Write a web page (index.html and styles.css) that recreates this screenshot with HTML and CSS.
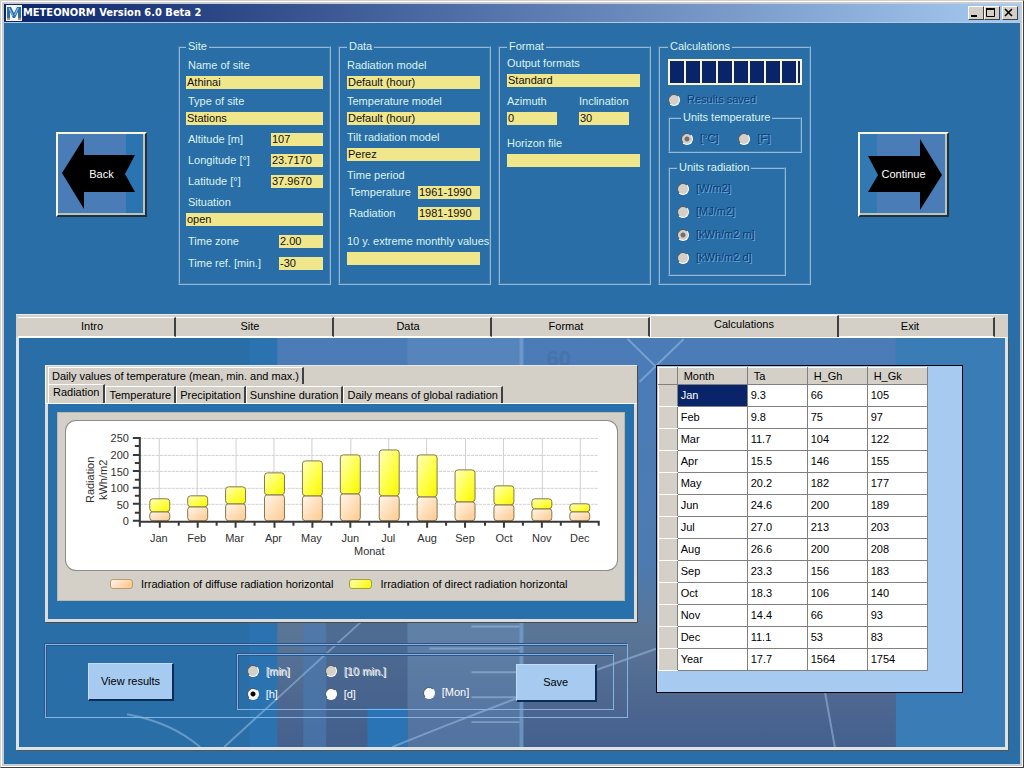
FILE: index.html
```html
<!DOCTYPE html>
<html lang="en">
<head>
<meta charset="utf-8">
<title>METEONORM Version 6.0 Beta 2</title>
<link rel="stylesheet" href="styles.css">
</head>
<body>
<div class="window">
  <header class="titlebar">
    <svg class="app-icon" viewBox="0 0 16 16" aria-hidden="true">
      <rect width="16" height="16" fill="#f4f8fc"/>
      <path d="M1 14V2h4l3 6 3-6h4v12h-3V7l-3 6H7L4 7v7z" fill="#2d6ca8"/>
      <path d="M3 3l4 8M9 10l3-7" stroke="#79b4dc" stroke-width="1.5" fill="none"/>
      <path d="M1 14h3M12 14h3" stroke="#c58a62" stroke-width="2"/>
    </svg>
    <h1 class="title">METEONORM Version 6.0 Beta 2</h1>
    <div class="window-buttons">
      <button class="winbtn" aria-label="Minimize"><svg viewBox="0 0 12 10"><path d="M2 8h6" stroke="#000" stroke-width="2"/></svg></button>
      <button class="winbtn" aria-label="Maximize"><svg viewBox="0 0 12 10"><path d="M1.500 1.500v7h8v-7M1 1h9" stroke="#000" fill="none"/><path d="M1 1h9" stroke="#000" stroke-width="2"/></svg></button>
      <button class="winbtn winbtn-close" aria-label="Close"><svg viewBox="0 0 12 10"><path d="M2 1l7 7M9 1l-7 7" stroke="#000" stroke-width="1.600"/></svg></button>
    </div>
  </header>

  <section class="overview">
    <button class="nav-btn nav-back">
      <svg viewBox="0 0 87 81" preserveAspectRatio="none" aria-hidden="true"><path d="M4 39L26 4v17h51l-10 19 10 18H26v17z"/></svg>
      <span>Back</span>
    </button>

    <div class="groups">
      <fieldset class="group">
        <legend>Site</legend>
        <div class="pair sp6"><label for="name">Name of site</label><input id="name" readonly value="Athinai"></div>
        <div class="pair sp6"><label for="type">Type of site</label><input id="type" readonly value="Stations"></div>
        <div class="line sp8"><label for="alt">Altitude [m]</label><input id="alt" class="w52" readonly value="107"></div>
        <div class="line sp8"><label for="lon">Longitude [°]</label><input id="lon" class="w52" readonly value="23.7170"></div>
        <div class="line sp8"><label for="lat">Latitude [°]</label><input id="lat" class="w52" readonly value="37.9670"></div>
        <div class="pair sp8"><label for="sit">Situation</label><input id="sit" readonly value="open"></div>
        <div class="line sp9"><label for="tz">Time zone</label><input id="tz" class="w44" readonly value="2.00"></div>
        <div class="line sp9"><label for="tr">Time ref. [min.]</label><input id="tr" class="w44" readonly value="-30"></div>
      </fieldset>

      <fieldset class="group group-data">
        <legend>Data</legend>
        <div class="pair sp6"><label for="rad">Radiation model</label><input id="rad" readonly value="Default (hour)"></div>
        <div class="pair sp6"><label for="tmp">Temperature model</label><input id="tmp" readonly value="Default (hour)"></div>
        <div class="pair sp6"><label for="tilt">Tilt radiation model</label><input id="tilt" readonly value="Perez"></div>
        <p class="caption sp8">Time period</p>
        <div class="line sp4"><label for="pt">Temperature</label><input id="pt" class="w62" readonly value="1961-1990"></div>
        <div class="line sp8"><label for="pr">Radiation</label><input id="pr" class="w62" readonly value="1981-1990"></div>
        <div class="pair sp15"><label class="wide" for="ext">10 y. extreme monthly values</label><input id="ext" readonly value=""></div>
      </fieldset>

      <fieldset class="group group-format">
        <legend>Format</legend>
        <div class="pair sp4"><label for="out">Output formats</label><input id="out" readonly value="Standard"></div>
        <div class="twin sp8">
          <div class="pair"><label for="azi">Azimuth</label><input id="azi" readonly value="0"></div>
          <div class="pair"><label for="inc">Inclination</label><input id="inc" readonly value="30"></div>
        </div>
        <div class="pair sp12"><label for="hor">Horizon file</label><input id="hor" readonly value=""></div>
      </fieldset>

      <fieldset class="group group-calc">
        <legend>Calculations</legend>
        <progress class="progress" max="100" value="100" aria-label="Calculation progress"></progress>
        <label class="radio sp8"><input type="radio" name="saved" disabled><span>Results saved</span></label>
        <fieldset class="subgroup temp">
          <legend>Units temperature</legend>
          <label class="radio"><input type="radio" name="ut" disabled checked><span>[°C]</span></label>
          <label class="radio"><input type="radio" name="ut" disabled><span>[F]</span></label>
        </fieldset>
        <fieldset class="subgroup radn">
          <legend>Units radiation</legend>
          <label class="radio"><input type="radio" name="ur" disabled><span>[W/m2]</span></label>
          <label class="radio"><input type="radio" name="ur" disabled><span>[MJ/m2]</span></label>
          <label class="radio"><input type="radio" name="ur" disabled checked><span>[kWh/m2 m]</span></label>
          <label class="radio"><input type="radio" name="ur" disabled><span>[kWh/m2 d]</span></label>
        </fieldset>
      </fieldset>
    </div>

    <button class="nav-btn nav-next">
      <svg viewBox="0 0 87 81" preserveAspectRatio="none" aria-hidden="true"><path d="M82 41L60 5v17H8l10 19L8 58h52v18z"/></svg>
      <span>Continue</span>
    </button>
  </section>

  <main class="wizard">
    <nav class="tabs">
      <button class="tab">Intro</button>
      <button class="tab">Site</button>
      <button class="tab">Data</button>
      <button class="tab">Format</button>
      <button class="tab tab-active">Calculations</button>
      <button class="tab">Exit</button>
    </nav>

    <div class="page">
      <svg class="backdrop" viewBox="0 0 985 411" preserveAspectRatio="none" aria-hidden="true">
        <defs>
          <linearGradient id="bg" x1="0" y1="0" x2="0" y2="1">
            <stop offset="0" stop-color="#4b7cb8"/><stop offset=".55" stop-color="#4d7ab0"/>
            <stop offset=".72" stop-color="#5a7696"/><stop offset=".9" stop-color="#4c6690"/><stop offset="1" stop-color="#44608e"/>
          </linearGradient>
        </defs>
        <rect width="985" height="411" fill="#2a6ea8"/>
        <rect x="230" width="28" height="411" fill="#2a73b0"/>
        <rect x="258" width="618" height="411" fill="url(#bg)"/>
        <rect x="388" width="115" height="411" fill="#6c94c4" opacity=".35"/>
        <rect x="284" y="280" width="23" height="131" fill="#4a7cb4" opacity=".6"/>
        <rect x="307" y="280" width="81" height="131" fill="#40608c" opacity=".45"/>
        <rect x="348" y="372" width="40" height="39" fill="#2a73b4"/>
        <rect x="500" width="4" height="411" fill="#7ba7d4" opacity=".6"/>
        <rect x="876" width="109" height="411" fill="#3a7db6"/>
        <text x="527" y="28" class="backdrop-text">60</text>
        <g fill="none" stroke="#a4c4e4" stroke-width="2" opacity=".5">
          <path d="M608 1L680 72M664 1L620 44M205 411L343 284M108 378Q152 386 181 411M373 411L425 390L500 361L640 311M805 355L815 411"/>
          <path d="M452 290h48M410 312h90M452 336h48M452 361h48M452 386h48"/>
        </g>
      </svg>

      <div class="left">
        <section class="results">
          <nav class="subtabs">
            <div class="subrow"><button class="subtab">Daily values of temperature (mean, min. and max.)</button></div>
            <div class="subrow">
              <button class="subtab subtab-active">Radiation</button>
              <button class="subtab">Temperature</button>
              <button class="subtab">Precipitation</button>
              <button class="subtab">Sunshine duration</button>
              <button class="subtab">Daily means of global radiation</button>
            </div>
          </nav>
          <div class="results-body">
            <figure class="chart">
              <svg class="plot" viewBox="0 0 552 149" role="img" aria-label="Monthly radiation in kWh/m2">
                <defs>
                  <linearGradient id="dif" x1="0" y1="0" x2="1" y2="1"><stop offset="0" stop-color="#fff6ec"/><stop offset="1" stop-color="#ffc98c"/></linearGradient>
                  <linearGradient id="dir" x1="0" y1="0" x2="1" y2="1"><stop offset="0" stop-color="#ffffc0"/><stop offset=".6" stop-color="#ffff3c"/><stop offset="1" stop-color="#f6f600"/></linearGradient>
                </defs>
                <path class="grid" d="M74 17.500H534M74 34.500H534M74 50.500H534M74 67.500H534M74 83.500H534"/>
                <path class="grid-v" d="M93.500 17V100M131.500 17V100M170.500 17V100M208.500 17V100M246.500 17V100M285.500 17V100M323.500 17V100M361.500 17V100M400.500 17V100M438.500 17V100M477.500 17V100M515.500 17V100"/>
                <g class="bar" fill="url(#dif)">
                  <rect x="84" y="91" width="20" height="9" rx="3"/><rect x="122" y="86" width="20" height="14" rx="3"/><rect x="160" y="83" width="20" height="17" rx="3"/><rect x="199" y="74" width="20" height="26" rx="3"/><rect x="237" y="75" width="20" height="25" rx="3"/><rect x="275" y="73" width="20" height="27" rx="3"/><rect x="314" y="75" width="20" height="25" rx="3"/><rect x="352" y="76" width="20" height="24" rx="3"/><rect x="390" y="81" width="20" height="19" rx="3"/><rect x="429" y="84" width="20" height="16" rx="3"/><rect x="467" y="88" width="20" height="12" rx="3"/><rect x="505" y="91" width="20" height="9" rx="3"/>
                </g>
                <g class="bar" fill="url(#dir)">
                  <rect x="84" y="78" width="20" height="13" rx="3"/><rect x="122" y="75" width="20" height="11" rx="3"/><rect x="160" y="66" width="20" height="17" rx="3"/><rect x="199" y="52" width="20" height="22" rx="3"/><rect x="237" y="40" width="20" height="35" rx="3"/><rect x="275" y="34" width="20" height="39" rx="3"/><rect x="314" y="29" width="20" height="46" rx="3"/><rect x="352" y="34" width="20" height="42" rx="3"/><rect x="390" y="49" width="20" height="32" rx="3"/><rect x="429" y="65" width="20" height="19" rx="3"/><rect x="467" y="78" width="20" height="10" rx="3"/><rect x="505" y="83" width="20" height="8" rx="3"/>
                </g>
                <path class="axis" d="M74 16V106M73 101H535M67 17h7M67 34h7M67 50h7M67 67h7M67 83h7M67 100h7M69 25h5M69 42h5M69 59h5M69 75h5M69 92h5M94 101v6M132 101v6M170 101v6M209 101v6M247 101v6M285 101v6M324 101v6M362 101v6M400 101v6M439 101v6M477 101v6M515 101v6M113 101v4M151 101v4M189 101v4M228 101v4M266 101v4M304 101v4M343 101v4M381 101v4M420 101v4M458 101v4M496 101v4M534 101v4"/>
                <g class="ticks-y"><text x="63" y="21">250</text><text x="63" y="38">200</text><text x="63" y="55">150</text><text x="63" y="71">100</text><text x="63" y="88">50</text><text x="63" y="104">0</text></g>
                <g class="ticks-x"><text x="93" y="121">Jan</text><text x="131" y="121">Feb</text><text x="169" y="121">Mar</text><text x="208" y="121">Apr</text><text x="246" y="121">May</text><text x="285" y="121">Jun</text><text x="323" y="121">Jul</text><text x="362" y="121">Aug</text><text x="400" y="121">Sep</text><text x="439" y="121">Oct</text><text x="477" y="121">Nov</text><text x="515" y="121">Dec</text><text x="304" y="134">Monat</text>
                <text transform="translate(28 59) rotate(-90)">Radiation</text><text transform="translate(41 59) rotate(-90)">kWh/m2</text></g>
              </svg>
              <figcaption class="legend">
                <span class="key"><i class="swatch swatch-diffuse"></i>Irradiation of diffuse radiation horizontal</span>
                <span class="key"><i class="swatch swatch-direct"></i>Irradiation of direct radiation horizontal</span>
              </figcaption>
            </figure>
          </div>
        </section>

        <section class="actions">
          <button class="btn btn-view">View results</button>
          <div class="save-box">
            <div class="choices">
              <label class="radio off"><input type="radio" name="res" disabled><span>[min]</span></label>
              <label class="radio off"><input type="radio" name="res" disabled><span>[10 min.]</span></label>
              <label class="radio"><input type="radio" name="res" checked><span>[h]</span></label>
              <label class="radio"><input type="radio" name="res"><span>[d]</span></label>
            </div>
            <label class="radio month"><input type="radio" name="res"><span>[Mon]</span></label>
            <button class="btn btn-save">Save</button>
          </div>
        </section>
      </div>

      <section class="data-panel">
        <table class="data">
          <thead><tr><th class="rowhead"></th><th class="month-col">Month</th><th>Ta</th><th>H_Gh</th><th>H_Gk</th></tr></thead>
          <tbody>
            <tr><th></th><td class="selected">Jan</td><td>9.3</td><td>66</td><td>105</td></tr>
            <tr><th></th><td>Feb</td><td>9.8</td><td>75</td><td>97</td></tr>
            <tr><th></th><td>Mar</td><td>11.7</td><td>104</td><td>122</td></tr>
            <tr><th></th><td>Apr</td><td>15.5</td><td>146</td><td>155</td></tr>
            <tr><th></th><td>May</td><td>20.2</td><td>182</td><td>177</td></tr>
            <tr><th></th><td>Jun</td><td>24.6</td><td>200</td><td>189</td></tr>
            <tr><th></th><td>Jul</td><td>27.0</td><td>213</td><td>203</td></tr>
            <tr><th></th><td>Aug</td><td>26.6</td><td>200</td><td>208</td></tr>
            <tr><th></th><td>Sep</td><td>23.3</td><td>156</td><td>183</td></tr>
            <tr><th></th><td>Oct</td><td>18.3</td><td>106</td><td>140</td></tr>
            <tr><th></th><td>Nov</td><td>14.4</td><td>66</td><td>93</td></tr>
            <tr><th></th><td>Dec</td><td>11.1</td><td>53</td><td>83</td></tr>
            <tr><th></th><td>Year</td><td>17.7</td><td>1564</td><td>1754</td></tr>
          </tbody>
        </table>
      </section>
    </div>
  </main>
</div>
</body>
</html>
```

FILE: styles.css
```css
* { box-sizing: border-box; }

body {
  margin: 0;
  font: 11px/13px "Liberation Sans", Arial, sans-serif;
  color: #000;
  background: #2a6ea8;
}

button, input { font: inherit; color: inherit; }
p, figure { margin: 0; }

.window {
  min-height: 100vh;
  display: flex;
  flex-direction: column;
  border: 1px solid #d4d0c8;
  border-right-color: #404040;
  border-bottom-color: #404040;
  box-shadow: inset 0 0 0 1px #fff, inset 0 0 0 3px #c9cdd2;
  padding: 3px;
}

/* Title bar */
.titlebar {
  display: flex;
  align-items: center;
  height: 19px;
  padding: 0 2px;
  gap: 1px;
  background: linear-gradient(90deg, #0a246a, #a6caf0);
  border-bottom: 1px solid #b4c8e0;
}
.app-icon { width: 16px; height: 16px; }
.title {
  flex: 1;
  margin: 0;
  color: #fff;
  font: bold 11px/16px "DejaVu Sans Condensed", "DejaVu Sans", sans-serif;
}
.window-buttons { display: flex; }
.winbtn {
  width: 16px;
  height: 14px;
  padding: 0;
  background: #d4d0c8;
  border: 1px solid #fff;
  border-right-color: #404040;
  border-bottom-color: #404040;
}
.winbtn svg { display: block; width: 12px; height: 10px; }
.winbtn-close { margin-left: 2px; }

/* Overview */
.overview {
  display: flex;
  align-items: flex-start;
  padding: 17px 71px 29px 52px;
}
.nav-btn {
  position: relative;
  width: 91px;
  height: 85px;
  margin-top: 92px;
  padding: 0;
  color: #fff;
  background: linear-gradient(90deg, #4a7db8 78%, #2a74b2 78%);
  border: 2px solid #fbf6d8;
  border-right-color: #22303c;
  border-bottom-color: #22303c;
  box-shadow: inset -2px -2px 0 #b8c4bc;
}
.nav-next { background: linear-gradient(90deg, #3279b4 20%, #4a7db8 20%); }
.nav-btn svg { position: absolute; inset: 0; width: 100%; height: 100%; }
.nav-btn span { position: relative; }

.groups {
  flex: 1;
  display: grid;
  grid-template-columns: repeat(4, 1fr);
  gap: 7px;
  margin: 0 47px 0 31px;
}
.group, .subgroup {
  min-width: 0;
  margin: 0;
  border: 2px groove #84bcec;
  color: #dcf4ec;
}
.group { min-height: 245px; padding: 0 6px 8px; }
.group > legend, .subgroup > legend { padding: 0 2px; }
.group-data, .group-format { padding: 0 9px 8px 7px; }
.group-calc { padding: 0 7px 7px 8px; }

.pair { display: flex; flex-direction: column; gap: 4px; }
.pair label { padding-left: 2px; }
.group-data .pair label, .group-data .caption, .group-format .pair label { padding-left: 0; }
.group-data .pair .wide { padding-left: 0; white-space: nowrap; }
.line { display: flex; justify-content: space-between; padding-left: 2px; white-space: nowrap; }
.twin { display: grid; grid-template-columns: 50px 50px; gap: 22px; }
.sp4 { margin-top: 4px; }
.sp6 { margin-top: 6px; }
.sp8 { margin-top: 8px; }
.sp9 { margin-top: 9px; }
.sp12 { margin-top: 12px; }
.sp15 { margin-top: 15px; }

.group input:not([type]) {
  height: 13px;
  min-width: 0;
  padding: 0 1px;
  border: 0;
  border-radius: 0;
  outline: 0;
  color: #101010;
  background: #f0e68c;
}
.w44 { width: 44px; }
.w52 { width: 52px; }
.w62 { width: 62px; }

.progress {
  appearance: none;
  display: block;
  width: 100%;
  height: 26px;
  margin-top: 6px;
  padding: 2px;
  background: #fdf6d0;
}
.progress::-webkit-progress-bar { background: #fdf0b0; }
.progress::-webkit-progress-value { background: repeating-linear-gradient(90deg, #0a246a 0 14px, #fdf6c0 14px 16px); }

.radio { display: flex; align-items: center; }
.radio input {
  appearance: none;
  flex: none;
  width: 12px;
  height: 12px;
  margin: 0;
  border: 1px solid #fff;
  border-top-color: #505a64;
  border-left-color: #505a64;
  border-radius: 50%;
  background: #fff;
}
.radio input:disabled { background: #d4d0c8; }
.radio input:checked { background: radial-gradient(circle, #000 0 2px, #fff 3px); }
.radio input:disabled:checked { background: radial-gradient(circle, #707070 0 2px, #d4d0c8 3px); }
.group-calc .radio input { margin-right: 7px; }
.group-calc .radio span { color: #0c3c70; text-shadow: 1px 1px 0 #6ea8dc; }

.subgroup { padding: 0 8px; }
.temp { display: flex; margin-top: 5px; padding: 8px 11px 6px; gap: 20px; }
.temp .radio:first-of-type { min-width: 31px; }
.radn { width: 118px; margin-top: 8px; padding: 8px 7px 10px; }
.radn .radio + .radio { margin-top: 10px; }

/* Main wizard tabs */
.wizard {
  flex: 1;
  display: flex;
  flex-direction: column;
  margin: 0 12px 14px;
}
.tabs {
  display: grid;
  grid-template-columns: 158fr 158fr 158fr 158fr 189fr 156fr;
  align-items: end;
  height: 23px;
  padding: 0 13px 0 2px;
  background: #d4d0c8;
  border-top: 1px solid #eceae4;
}
.tab {
  height: 20px;
  padding: 0 8px 2px 0;
  background: #d4d0c8;
  border: 0;
  border-top: 1px solid #fff;
  border-right: 2px solid #404040;
  border-bottom: 1px solid #fff;
}
.tab-active { height: 22px; border-bottom: 0; border-left: 1px solid #fff; padding: 0 0 4px; }
.tab:last-child { padding-right: 12px; }

.page {
  position: relative;
  flex: 1;
  display: flex;
  gap: 19px;
  padding: 27px 42px 28px 26px;
  border: 3px solid #dfe3e4;
  border-top: 1px solid #fff;
  box-shadow: 1px 1px 0 #555;
}
.backdrop { position: absolute; inset: 0; width: 100%; height: 100%; }
.backdrop-text { font: bold 22px "Liberation Sans", Arial, sans-serif; fill: #3c6498; opacity: .3; }

.left { position: relative; flex: 593; min-width: 0; display: flex; flex-direction: column; gap: 22px; }

/* Result tabs */
.results { box-shadow: 1px 1px 0 #4a4a4a; }
.subtabs { padding: 1px 0 0 2px; background: #d4d0c8; border-top: 1px solid #e8e8e8; border-left: 1px solid #fff; border-bottom: 1px solid #fff; }
.subrow { display: flex; align-items: flex-end; }
.subtab {
  height: 17px;
  padding: 0 3px;
  background: #d4d0c8;
  border: 0;
  border-top: 1px solid #fff;
  border-left: 1px solid #fff;
  border-right: 2px solid #404040;
  white-space: nowrap;
}
.subtab-active { height: 19px; padding: 0 4px 3px; }
.results-body {
  padding: 8px 9px 18px;
  background: #2770ac;
  border: 3px solid #dcdcdc;
  border-top: 0;
}
.chart { padding: 8px 7px 9px 8px; background: #d4d0c8; border: 1px solid #bcb8b0; }
.plot {
  display: block;
  width: 100%;
  background: #fff;
  border-radius: 10px;
  box-shadow: 0 0 0 1px #8c8c8c;
}
.plot text { font: 11px "Liberation Sans", Arial, sans-serif; fill: #303030; }
.grid, .grid-v { stroke: #d0d0d0; fill: none; }
.grid { stroke-dasharray: 3 1; }
.bar { stroke: #84784c; stroke-width: 1; }
.axis { stroke: #383838; stroke-width: 2; fill: none; }
.ticks-y { text-anchor: end; }
.ticks-x { text-anchor: middle; }
.legend { display: flex; gap: 16px; padding: 8px 0 0 44px; white-space: nowrap; }
.key { display: flex; align-items: center; gap: 8px; }
.swatch { width: 23px; height: 10px; border: 1px solid #b89c74; border-radius: 3px; background: linear-gradient(135deg, #fff6ec, #ffc080); }
.swatch-direct { border-color: #a4a430; background: linear-gradient(135deg, #ffffb0, #f8f800); }

/* Actions */
.actions {
  display: flex;
  align-items: center;
  justify-content: space-between;
  margin-right: 9px;
  padding: 9px 13px 7px 42px;
  border: 1px solid #84b4e4;
  box-shadow: inset 1px 1px 0 #2c5488, -1px -1px 0 #2c5488;
}
.btn {
  height: 38px;
  background: #a6caf0;
  border: 1px solid #c4dcf8;
  border-right: 2px solid #0c2c58;
  border-bottom: 2px solid #0c2c58;
}
.btn-view { width: 86px; }
.btn-save { width: 81px; margin-left: auto; }
.save-box {
  display: flex;
  align-items: center;
  width: 377px;
  padding: 9px 16px 7px 9px;
  border: 1px solid #84b4e4;
  box-shadow: inset 1px 1px 0 #2c5488, -1px -1px 0 #2c5488;
  color: #fff;
}
.save-box .btn { color: #000; }
.save-box .radio input { margin-right: 7px; }
.choices { display: grid; grid-template-columns: 78px 98px; row-gap: 10px; }
.off span { color: #c4ccd4; text-shadow: 1px 1px 0 #fff; }
.month { margin-top: 20px; }

/* Data table */
.data-panel {
  position: relative;
  flex: 305;
  align-self: flex-start;
  min-height: 328px;
  padding: 1px 0 0 1px;
  background: #a6caf0;
  border: 1px solid #000;
}
.data { border-collapse: collapse; table-layout: fixed; width: 270px; font-weight: normal; }
.data th, .data td { height: 22px; padding: 0 3px; border: 1px solid #808080; text-align: left; font-weight: normal; }
.data td { background: #fff; }
.data th { background: #d4d0c8; border-left-color: #fff; }
.data thead th { height: 17px; padding-left: 6px; border-top-color: #fff; }
.data tbody th { border-color: #fff; border-right-color: #808080; }
.rowhead { width: 19px; }
.month-col { width: 70px; }
.data .selected { background: #0a246a; color: #fff; }
```
